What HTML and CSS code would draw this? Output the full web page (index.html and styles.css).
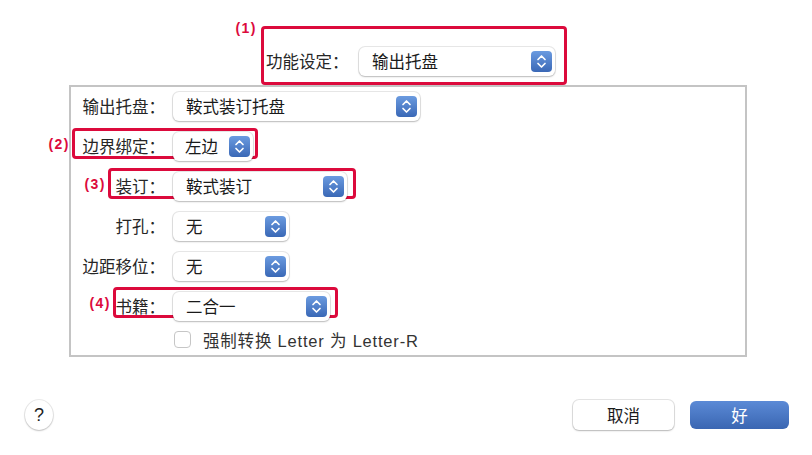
FILE: index.html
```html
<!DOCTYPE html>
<html lang="zh-CN">

<head>
    <meta charset="UTF-8">
    <meta name="viewport" content="width=device-width, initial-scale=1.0">
    <title>装订设置</title>
    <link rel="stylesheet" href="styles.css">
</head>

<body>

    <!-- Top: feature selector -->
    <div class="header">
        <div class="mark-box">
            <span class="tag tag-top">(1)</span>
            <span class="label">功能设定：</span>
            <div class="popup popup-feature">
                <span class="popup-text">输出托盘</span>
                <span class="stepper">
                    <svg width="21" height="21" viewBox="0 0 21 21"><path d="M7 8.5 L10.5 5 L14 8.5 M7 12.5 L10.5 16 L14 12.5" /></svg>
                </span>
            </div>
        </div>
    </div>

    <!-- Settings panel -->
    <div class="panel">
        <div class="row">
            <span class="label">输出托盘：</span>
            <div class="popup popup-tray">
                <span class="popup-text">鞍式装订托盘</span>
                <span class="stepper">
                    <svg width="21" height="21" viewBox="0 0 21 21"><path d="M7 8.5 L10.5 5 L14 8.5 M7 12.5 L10.5 16 L14 12.5" /></svg>
                </span>
            </div>
        </div>

        <div class="row">
            <span class="mark mark-2"><span class="tag">(2)</span></span>
            <span class="label">边界绑定：</span>
            <div class="popup popup-edge">
                <span class="popup-text">左边</span>
                <span class="stepper">
                    <svg width="21" height="21" viewBox="0 0 21 21"><path d="M7 8.5 L10.5 5 L14 8.5 M7 12.5 L10.5 16 L14 12.5" /></svg>
                </span>
            </div>
        </div>

        <div class="row">
            <span class="mark mark-3"><span class="tag">(3)</span></span>
            <span class="label">装订：</span>
            <div class="popup popup-staple">
                <span class="popup-text">鞍式装订</span>
                <span class="stepper">
                    <svg width="21" height="21" viewBox="0 0 21 21"><path d="M7 8.5 L10.5 5 L14 8.5 M7 12.5 L10.5 16 L14 12.5" /></svg>
                </span>
            </div>
        </div>

        <div class="row">
            <span class="label">打孔：</span>
            <div class="popup popup-small">
                <span class="popup-text">无</span>
                <span class="stepper">
                    <svg width="21" height="21" viewBox="0 0 21 21"><path d="M7 8.5 L10.5 5 L14 8.5 M7 12.5 L10.5 16 L14 12.5" /></svg>
                </span>
            </div>
        </div>

        <div class="row">
            <span class="label">边距移位：</span>
            <div class="popup popup-small">
                <span class="popup-text">无</span>
                <span class="stepper">
                    <svg width="21" height="21" viewBox="0 0 21 21"><path d="M7 8.5 L10.5 5 L14 8.5 M7 12.5 L10.5 16 L14 12.5" /></svg>
                </span>
            </div>
        </div>

        <div class="row">
            <span class="mark mark-4"><span class="tag">(4)</span></span>
            <span class="label">书籍：</span>
            <div class="popup popup-book">
                <span class="popup-text">二合一</span>
                <span class="stepper">
                    <svg width="21" height="21" viewBox="0 0 21 21"><path d="M7 8.5 L10.5 5 L14 8.5 M7 12.5 L10.5 16 L14 12.5" /></svg>
                </span>
            </div>
        </div>

        <div class="row row-check">
            <span class="label"></span>
            <span class="checkbox"></span>
            <span class="check-text">强制转换 Letter 为 Letter-R</span>
        </div>
    </div>

    <!-- Bottom buttons -->
    <div class="footer">
        <button class="help">?</button>
        <div class="actions">
            <button class="btn btn-cancel">取消</button>
            <button class="btn btn-ok">好</button>
        </div>
    </div>

</body>

</html>
```

FILE: styles.css
```css
/* Basic Reset */
* {
    margin: 0;
    padding: 0;
    box-sizing: border-box;
}

body {
    background: #fff;
    font-family: "Noto Sans CJK SC", "Liberation Sans", sans-serif;
    font-size: 16.5px;
    color: #262626;
    width: 812px;
    height: 455px;
    overflow: hidden;
}

/* Header with feature selector */
.header {
    height: 85px;
    padding: 26px 0 0 261px;
}

.mark-box {
    position: relative;
    display: flex;
    align-items: center;
    width: 306px;
    height: 59px;
    padding: 11px 9px 0 2px;
    border: 3px solid #dc0a3c;
    border-radius: 4px;
}

.mark-box .label {
    width: 94px;
    text-align: left;
}

/* Red annotation marks */
.mark {
    position: absolute;
    top: -3px;
    height: 31px;
    border: 3px solid #dc0a3c;
    border-radius: 4px;
    pointer-events: none;
}

.mark-2 {
    left: 1px;
    width: 186px;
}

.mark-3 {
    left: 37px;
    width: 248px;
}

.mark-4 {
    left: 42px;
    width: 225px;
    top: -4px;
}

.tag {
    position: absolute;
    right: calc(100% + 5px);
    top: 50%;
    transform: translateY(-50%);
    font-family: "Liberation Sans", sans-serif;
    font-size: 14px;
    font-weight: bold;
    letter-spacing: 1.5px;
    color: #dc0a3c;
}

.tag-top {
    top: -9px;
    transform: none;
    right: calc(100% + 7px);
}

/* Panel */
.panel {
    margin-left: 69px;
    width: 678px;
    height: 272px;
    border: 2px solid #c4c4c4;
    padding-top: 4px;
    display: flex;
    flex-direction: column;
    gap: 10px;
}

.row {
    position: relative;
    display: flex;
    align-items: center;
    height: 30px;
}

.row .label {
    width: 94px;
    text-align: right;
    flex-shrink: 0;
    margin-right: 8px;
}

/* Popup buttons */
.popup {
    position: relative;
    display: flex;
    align-items: center;
    justify-content: space-between;
    height: 29px;
    padding: 0 3px 0 13px;
    background: #fff;
    border-radius: 6px;
    box-shadow: 0 0 0 1px rgba(0, 0, 0, 0.09), 0 1px 2px rgba(0, 0, 0, 0.2);
    color: #1a1a1a;
}

.popup-feature {
    width: 198px;
}

.popup-tray {
    width: 247px;
}

.popup-edge {
    width: 80px;
    padding-left: 12px;
}

.popup-staple {
    width: 174px;
}

.popup-small {
    width: 116px;
}

.popup-book {
    width: 157px;
}

.stepper {
    display: flex;
    width: 21px;
    height: 21px;
    border-radius: 4px;
    background: linear-gradient(#6b9be0, #3a68b6);
}

.stepper svg path {
    fill: none;
    stroke: #fff;
    stroke-width: 1.7;
    stroke-linecap: round;
    stroke-linejoin: round;
}

/* Checkbox row */
.row-check {
    height: 17px;
}

.checkbox {
    width: 17px;
    height: 17px;
    margin-left: 1px;
    border: 1px solid #c6c6c6;
    border-radius: 4px;
    background: #fff;
}

.check-text {
    margin-left: 12px;
    font-family: "Liberation Sans", "Noto Sans CJK SC", sans-serif;
    font-size: 16.5px;
    letter-spacing: 0.8px;
    color: #333;
}

/* Footer */
.footer {
    display: flex;
    justify-content: space-between;
    align-items: center;
    margin-top: 43px;
    padding: 0 23px 0 25px;
}

.help {
    width: 28px;
    height: 30px;
    border: none;
    border-radius: 50%;
    background: #fff;
    box-shadow: 0 0 0 1px rgba(0, 0, 0, 0.08), 0 1px 2px rgba(0, 0, 0, 0.18);
    font-family: "Liberation Sans", sans-serif;
    font-size: 18px;
    color: #222;
}

.actions {
    display: flex;
    align-items: center;
    gap: 16px;
}

.btn {
    border: none;
    border-radius: 6px;
    font-family: "Noto Sans CJK SC", sans-serif;
    font-size: 16.5px;
}

.btn-cancel {
    width: 101px;
    height: 30px;
    background: #fff;
    color: #1a1a1a;
    box-shadow: 0 0 0 1px rgba(0, 0, 0, 0.1), 0 1px 2px rgba(0, 0, 0, 0.2);
}

.btn-ok {
    width: 99px;
    height: 28px;
    background: linear-gradient(#5b8ad6, #3a66b2);
    color: #fff;
}
```
